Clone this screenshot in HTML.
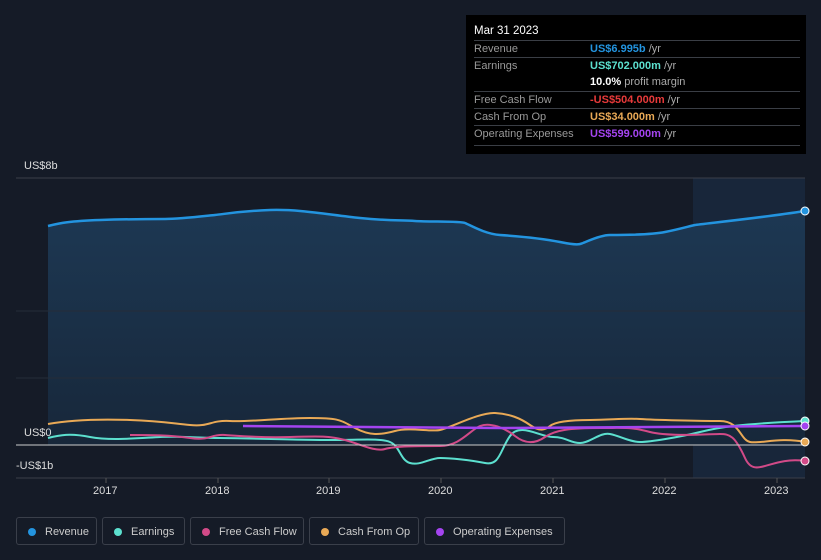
<!DOCTYPE html>
<html><head><meta charset="utf-8"><style>
body{margin:0;width:821px;height:560px;background:#151b27;font-family:"Liberation Sans",sans-serif;overflow:hidden;position:relative}
.tt{position:absolute;left:466px;top:15px;width:340px;height:139px;background:#000;color:#fff;font-size:11px}
.tt .h{position:absolute;left:8px;top:10px;font-size:11.5px}
.row{position:absolute;left:8px;width:326px;border-top:1px solid #3a3e45;height:17px;line-height:17px}
.row span.l{color:#999;}
.row span.v{position:absolute;left:116px;font-weight:bold}
.row i{font-style:normal;color:#aaa;font-weight:normal}
.leg{position:absolute;top:517px;height:28px;border:1px solid #3a3f4a;border-radius:3px;color:#ccc;font-size:11px;line-height:28px;box-sizing:border-box;padding-left:28px}
.leg b{position:absolute;left:11px;top:10px;width:8px;height:8px;border-radius:50%}
.ax{position:absolute;color:#ddd;font-size:11px}
</style></head><body>
<svg width="821" height="560" style="position:absolute;left:0;top:0">
<defs><linearGradient id="g" x1="0" y1="0" x2="0" y2="1"><stop offset="0" stop-color="#1d3853"/><stop offset="1" stop-color="#17273a"/></linearGradient></defs>
<rect x="693" y="178" width="112" height="300" fill="#18263a"/>
<path d="M48,226 C60,223 70,221 100,220 S150,219 165,219 S205,216 215,215 S240,211 270,210 S330,215 360,218 S400,220 415,221 S460,221 465,223 S485,234 500,235 S540,238 560,242 S580,244 583,243 S600,235 610,235 S650,235 665,232 S690,226 695,225 S760,218 805,211 L805,445 L48,445Z" fill="url(#g)"/>
<line x1="16" y1="178" x2="805" y2="178" stroke="#3a3f4a"/>
<line x1="16" y1="311" x2="805" y2="311" stroke="#252c38"/>
<line x1="16" y1="378" x2="805" y2="378" stroke="#252c38"/>
<line x1="16" y1="478" x2="805" y2="478" stroke="#3a3f4a"/>
<path d="M48,226 C60,223 70,221 100,220 S150,219 165,219 S205,216 215,215 S240,211 270,210 S330,215 360,218 S400,220 415,221 S460,221 465,223 S485,234 500,235 S540,238 560,242 S580,244 583,243 S600,235 610,235 S650,235 665,232 S690,226 695,225 S760,218 805,211" fill="none" stroke="#2394df" stroke-width="2.5"/>
<path d="M48,424 C70,420 100,419 130,420 S170,423 190,425 S210,420 230,421 S280,418 310,418 S340,420 355,428 S380,435 395,431 S430,432 440,430 S480,412 495,413 S520,418 530,425 S545,430 550,426 S570,420 590,420 S625,418 640,419 S700,421 720,421 S740,440 750,442 S780,437 805,442" fill="none" stroke="#e9a956" stroke-width="2"/>
<path d="M48,438 C60,435 70,433 90,437 S140,438 160,437 S200,438 220,438 S300,440 330,440 S380,438 390,442 S400,460 410,463 S430,458 440,458 S470,460 485,463 S500,450 510,436 S540,437 553,437 S570,443 580,443 S600,432 610,434 S630,442 640,442 S680,437 700,432 S740,424 805,421" fill="none" stroke="#5ce0cf" stroke-width="2"/>
<path d="M130,435 C150,435 170,435 190,438 S210,434 225,435 S260,438 290,437 S330,436 345,440 S375,452 385,449 S420,446 440,446 S470,430 480,426 S505,428 515,436 S535,444 545,437 S570,428 600,428 S630,427 650,432 S710,434 720,434 S735,436 745,458 S770,456 805,461" fill="none" stroke="#d24a88" stroke-width="2"/>
<path d="M243,426 L500,428 L805,426" fill="none" stroke="#a444f0" stroke-width="2.5"/>
<line x1="16" y1="445" x2="805" y2="445" stroke="#ccc" stroke-width="1"/>
<circle cx="805" cy="211" r="4" fill="#2394df" stroke="#fff"/>
<circle cx="805" cy="421" r="4" fill="#5ce0cf" stroke="#fff"/>
<circle cx="805" cy="426" r="4" fill="#a444f0" stroke="#fff"/>
<circle cx="805" cy="442" r="4" fill="#e9a956" stroke="#fff"/>
<circle cx="805" cy="461" r="4" fill="#d24a88" stroke="#fff"/>
<g stroke="#555" ><line x1="106" y1="478" x2="106" y2="483"/><line x1="218" y1="478" x2="218" y2="483"/><line x1="329" y1="478" x2="329" y2="483"/><line x1="441" y1="478" x2="441" y2="483"/><line x1="553" y1="478" x2="553" y2="483"/><line x1="665" y1="478" x2="665" y2="483"/><line x1="777" y1="478" x2="777" y2="483"/></g>
</svg>
<div class="ax" style="left:24px;top:160px">US$8b</div>
<div class="ax" style="left:24px;top:427px">US$0</div>
<div class="ax" style="left:16px;top:460px">-US$1b</div>
<div class="ax" style="left:93px;top:485px">2017</div>
<div class="ax" style="left:205px;top:485px">2018</div>
<div class="ax" style="left:316px;top:485px">2019</div>
<div class="ax" style="left:428px;top:485px">2020</div>
<div class="ax" style="left:540px;top:485px">2021</div>
<div class="ax" style="left:652px;top:485px">2022</div>
<div class="ax" style="left:764px;top:485px">2023</div>
<div class="tt">
<div class="h">Mar 31 2023</div>
<div class="row" style="top:25px"><span class="l">Revenue</span><span class="v" style="color:#2394df">US$6.995b <i>/yr</i></span></div>
<div class="row" style="top:42px"><span class="l">Earnings</span><span class="v" style="color:#5ce0cf">US$702.000m <i>/yr</i></span></div>
<div class="row" style="top:59px;border:0"><span class="v" style="color:#fff">10.0% <i>profit margin</i></span></div>
<div class="row" style="top:76px"><span class="l">Free Cash Flow</span><span class="v" style="color:#e83a3a">-US$504.000m <i>/yr</i></span></div>
<div class="row" style="top:93px"><span class="l">Cash From Op</span><span class="v" style="color:#e9a956">US$34.000m <i>/yr</i></span></div>
<div class="row" style="top:110px"><span class="l">Operating Expenses</span><span class="v" style="color:#a444f0">US$599.000m <i>/yr</i></span></div>
<div class="row" style="top:130px;height:0"></div>
</div>
<div class="leg" style="left:16px;width:81px"><b style="background:#2394df"></b>Revenue</div>
<div class="leg" style="left:102px;width:83px"><b style="background:#5ce0cf"></b>Earnings</div>
<div class="leg" style="left:190px;width:114px"><b style="background:#d24a88"></b>Free Cash Flow</div>
<div class="leg" style="left:309px;width:110px"><b style="background:#e9a956"></b>Cash From Op</div>
<div class="leg" style="left:424px;width:141px"><b style="background:#a444f0"></b>Operating Expenses</div>
</body></html>
